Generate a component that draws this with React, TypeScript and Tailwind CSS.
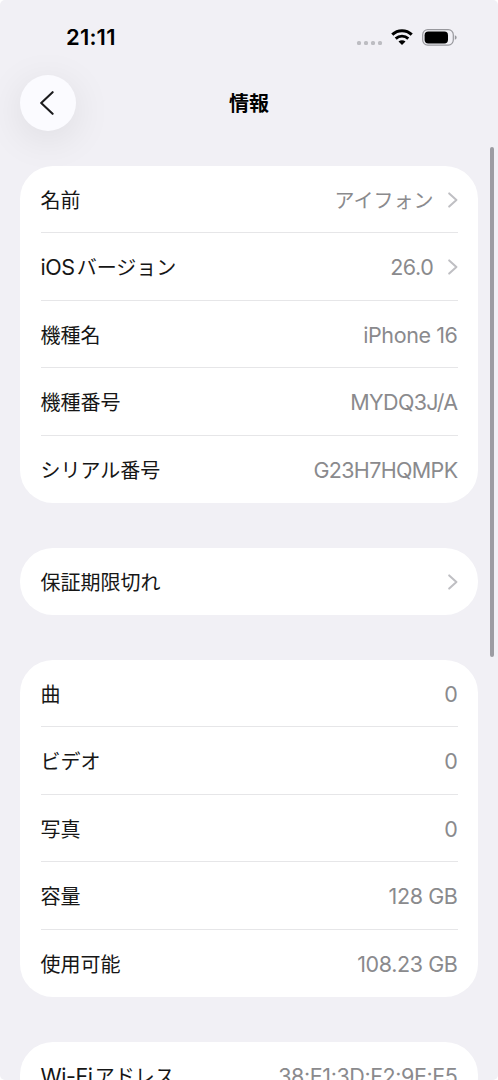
import React from 'react';

interface InfoRow {
  label: string;
  value?: string;
  link?: boolean;
  tight?: boolean;
}

const SECTIONS: InfoRow[][] = [
  [
    { label: '名前', value: 'アイフォン', link: true },
    { label: 'iOSバージョン', value: '26.0', link: true },
    { label: '機種名', value: 'iPhone 16' },
    { label: '機種番号', value: 'MYDQ3J/A', tight: true },
    { label: 'シリアル番号', value: 'G23H7HQMPK', tight: true },
  ],
  [{ label: '保証期限切れ', link: true }],
  [
    { label: '曲', value: '0' },
    { label: 'ビデオ', value: '0' },
    { label: '写真', value: '0' },
    { label: '容量', value: '128 GB' },
    { label: '使用可能', value: '108.23 GB' },
  ],
  [{ label: 'Wi-Fiアドレス', value: '38:E1:3D:F2:9E:E5' }],
];

// Latin runs are set slightly larger than the kana and kanji around them
const MixedText: React.FC<{ text: string; tight?: boolean }> = ({ text, tight }) => (
  <span className="flex items-center">
    {(text.match(/[\x20-\x7e]+|[^\x20-\x7e]+/g) ?? []).map((run, i) =>
      /^[\x20-\x7e]/.test(run) ? (
        <span
          key={i}
          className={`pt-[1px] text-[21.5px] ${tight ? 'tracking-[-0.65px]' : 'tracking-[-0.4px]'}`}
        >
          {run}
        </span>
      ) : (
        <span key={i} className={`pt-[3px] text-[20px] ${i > 0 ? 'pl-[2px]' : ''}`}>{run}</span>
      )
    )}
  </span>
);

const ChevronRight = () => (
  <svg width="10" height="16" viewBox="0 0 10 16" fill="none" className="ml-[14px] mt-[1px] shrink-0">
    <path d="M1.2 1.4 8.4 8l-7.2 6.6" stroke="#bfbfc3" strokeWidth="2" strokeLinecap="round" strokeLinejoin="round" />
  </svg>
);

const StatusBar = () => (
  <div className="flex h-[74.5px] items-start justify-between pl-[66px] pr-[41px] pt-[25px]">
    <span className="text-[22px] font-semibold leading-[25px] tracking-[0.2px]">21:11</span>
    <div className="flex h-[25px] items-center">
      <div className="mr-[9px] mt-[10px] flex gap-[3px]">
        {[0, 1, 2, 3].map((i) => (
          <span key={i} className="h-[4px] w-[4px] rounded-[1.5px] bg-[#bdbdc2]" />
        ))}
      </div>
      <svg width="22" height="17" viewBox="0 0 22 17" fill="none" className="mr-[9px]">
        <path d="M1.3 5.6C6.8 .5 15.2 .5 20.7 5.6" stroke="#000" strokeWidth="3.1" />
        <path d="M4.7 9.6c3.6-3.3 9-3.3 12.6 0" stroke="#000" strokeWidth="2.9" />
        <path d="M7.5 12.4c2-1.7 5-1.7 7 0L11 16z" fill="#000" />
      </svg>
      <svg width="35" height="17" viewBox="0 0 35 17" fill="none">
        <rect x=".7" y=".7" width="30.6" height="15.4" rx="5" stroke="#98989d" strokeWidth="1.2" />
        <rect x="2.6" y="2.6" width="23.4" height="11.8" rx="3.6" fill="#000" />
        <path d="M32.8 6.2c1.4.5 1.8 1.3 1.8 2.3s-.4 1.8-1.8 2.3z" fill="#98989d" />
      </svg>
    </div>
  </div>
);

const Header = () => (
  <div className="grid h-[91.3px] grid-cols-[56px_1fr_56px] items-start px-5">
    <button className="flex h-[56px] w-[56px] items-center justify-center rounded-full bg-[#fbfbff] shadow-[0_8px_40px_rgba(0,0,0,0.09)]">
      <svg width="14" height="24" viewBox="0 0 14 24" fill="none" className="mr-[3px]">
        <path d="M12.6 1.2 1.2 12l11.4 10.8" stroke="#1c1c1e" strokeWidth="2.1" strokeLinecap="round" strokeLinejoin="round" />
      </svg>
    </button>
    <h1 className="pt-[1px] text-center text-[20px] font-bold leading-[57px]">情報</h1>
  </div>
);

const Section: React.FC<{ rows: InfoRow[] }> = ({ rows }) => (
  <section className="rounded-[33px] bg-white px-[20.5px]">
    {rows.map((row) => (
      <div
        key={row.label}
        className="flex h-[67.5px] items-center justify-between border-b border-[#e6e6e8] leading-[28px] last:border-b-0"
      >
        <span className="whitespace-nowrap text-[#161616]">
          <MixedText text={row.label} />
        </span>
        <span className="flex items-center whitespace-nowrap text-[#8a8a8d]">
          {row.value && <MixedText text={row.value} tight={row.tight} />}
          {row.link && <ChevronRight />}
        </span>
      </div>
    ))}
  </section>
);

const App = () => {
  return (
    <div className="h-[1080px] w-[498px] overflow-hidden bg-white font-['Inter','Noto_Sans_CJK_JP',sans-serif] text-black">
      <div className="relative h-full overflow-hidden rounded-[5px] bg-[#f1f0f5]">
        <StatusBar />
        <Header />
        <main className="flex flex-col gap-[44.6px] px-5">
          {SECTIONS.map((rows) => (
            <Section key={rows[0].label} rows={rows} />
          ))}
        </main>
        <div className="absolute right-[4px] top-[147px] h-[510px] w-[4px] rounded-full bg-[#9c9ca2]" />
      </div>
    </div>
  );
};

export default App;
